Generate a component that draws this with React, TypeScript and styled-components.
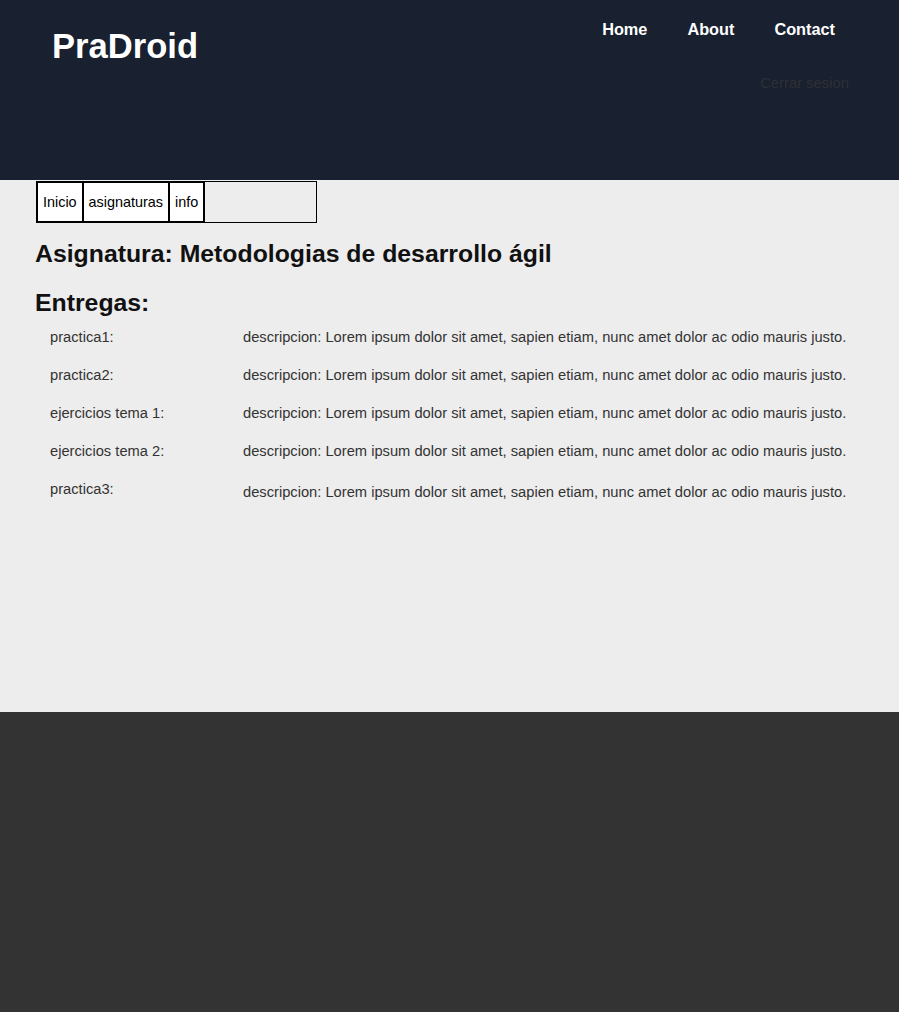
import React from "react";
import styled, { createGlobalStyle } from "styled-components";

const Global = createGlobalStyle`
  html, body { margin: 0; padding: 0; background: #333333; }
  body { font-family: "Liberation Sans", Arial, sans-serif; }
`;

const Page = styled.div`
  display: flex;
  flex-direction: column;
  min-height: 1012px;
`;

const Header = styled.header`
  background: #19202f;
  height: 180px;
  display: flex;
  justify-content: space-between;
  box-sizing: border-box;
  padding: 0 50px 0 52px;
`;

const Logo = styled.h1`
  margin: 26px 0 0;
  font-size: 34.6px;
  font-weight: bold;
  color: #ffffff;
  line-height: 40px;
  height: 40px;
`;

const RightCol = styled.div`
  display: flex;
  flex-direction: column;
  align-items: flex-end;
`;

const Nav = styled.nav`
  display: flex;
  gap: 40px;
  margin-top: 19px;
  margin-right: 14px;
`;

const NavLink = styled.a`
  color: #ffffff;
  font-weight: bold;
  font-size: 16.3px;
  line-height: 20px;
  text-decoration: none;
`;

const Logout = styled.a`
  margin-top: 34px;
  color: #2e3036;
  font-size: 14.8px;
  line-height: 20px;
  text-decoration: none;
`;

const Main = styled.main`
  background: #ededed;
  height: 532px;
  box-sizing: border-box;
  padding: 1px 0 0 35px;
`;

const Tabs = styled.div`
  display: flex;
  width: 281px;
  height: 42px;
  box-sizing: border-box;
  border: 1px solid #000;
  margin-left: 1px;
`;

const Tab = styled.a<{ first?: boolean }>`
  display: flex;
  align-items: center;
  background: #ffffff;
  color: #000;
  font-size: 14.4px;
  padding: 0 5px;
  border: 2px solid #000;
  border-left-width: ${(p) => (p.first ? "2px" : "0")};
  margin: -1px 0 -1px ${(p) => (p.first ? "-1px" : "0")};
  text-decoration: none;
`;

const Title = styled.h2`
  margin: 17px 0 0;
  font-size: 24.8px;
  line-height: 28px;
  color: #111;
`;

const Sub = styled.h2`
  margin: 21px 0 0;
  font-size: 24.8px;
  line-height: 28px;
  color: #111;
`;

const List = styled.div`
  display: flex;
  flex-direction: column;
  margin-top: 10px;
  padding-left: 15px;
`;

const Row = styled.div`
  display: grid;
  grid-template-columns: 193px 1fr;
  height: 38px;
  align-items: start;
  font-size: 14.7px;
  line-height: 20px;
  color: #333;
`;

const Desc = styled.span<{ shift?: boolean }>`
  margin-top: ${(p) => (p.shift ? "3px" : "0")};
`;

const Footer = styled.footer`
  background: #333333;
  height: 300px;
`;

const items = ["practica1:", "practica2:", "ejercicios tema 1:", "ejercicios tema 2:", "practica3:"];
const desc = "descripcion: Lorem ipsum dolor sit amet, sapien etiam, nunc amet dolor ac odio mauris justo.";

export default function App() {
  return (
    <Page>
      <Global />
      <Header>
        <Logo>PraDroid</Logo>
        <RightCol>
          <Nav>
            <NavLink href="#">Home</NavLink>
            <NavLink href="#">About</NavLink>
            <NavLink href="#">Contact</NavLink>
          </Nav>
          <Logout href="#">Cerrar sesion</Logout>
        </RightCol>
      </Header>
      <Main>
        <Tabs>
          <Tab href="#" first>Inicio</Tab>
          <Tab href="#">asignaturas</Tab>
          <Tab href="#">info</Tab>
        </Tabs>
        <Title>Asignatura: Metodologias de desarrollo ágil</Title>
        <Sub>Entregas:</Sub>
        <List>
          {items.map((it, i) => (
            <Row key={it}>
              <span>{it}</span>
              <Desc shift={i === items.length - 1}>{desc}</Desc>
            </Row>
          ))}
        </List>
      </Main>
      <Footer />
    </Page>
  );
}
